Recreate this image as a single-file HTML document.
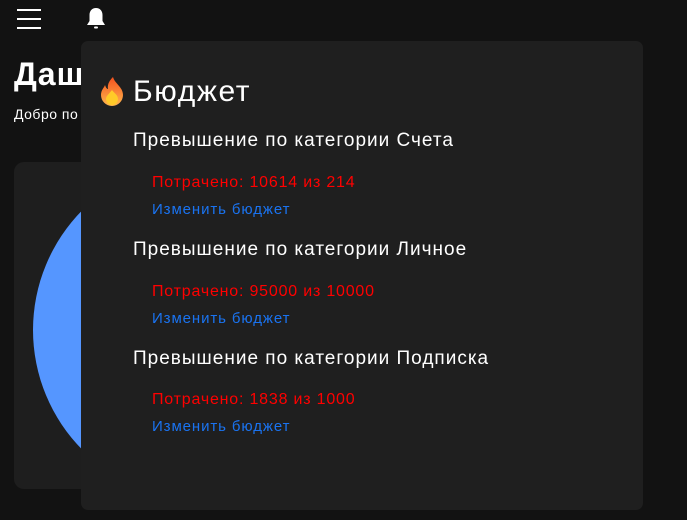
<!DOCTYPE html>
<html><head><meta charset="utf-8"><style>
body{margin:0;width:687px;height:520px;background:#121212;overflow:hidden;position:relative;font-family:"Liberation Sans",sans-serif;color:#fff}
.burger{position:absolute;left:17px;top:9px;width:24px}
.burger div{height:2px;background:#fff;margin-bottom:7px}
.h1{position:absolute;left:14px;top:56px;font-size:32px;font-weight:bold;letter-spacing:1px}
.sub{position:absolute;left:14px;top:106px;font-size:14px;letter-spacing:0.5px}
.card{position:absolute;left:14px;top:162px;width:600px;height:327px;background:#1e1e1e;border-radius:10px;overflow:hidden}
.circle{position:absolute;left:19px;top:-2px;width:340px;height:340px;border-radius:50%;background:#5596ff}
.pop{position:absolute;left:81px;top:41px;width:562px;height:469px;background:#1f1f1f;border-radius:7px}
.t{position:absolute;left:52px;top:34px;font-size:30px;letter-spacing:1.6px}
.fire{position:absolute;left:18px;top:35px}
.hd{position:absolute;left:52px;font-size:19px;letter-spacing:1px}
.red{position:absolute;left:71px;font-size:16px;color:#f00;letter-spacing:0.8px}
.lnk{position:absolute;left:71px;font-size:15px;color:#1a73f0;letter-spacing:0.9px}
</style></head><body>
<div class="burger"><div></div><div></div><div></div></div>
<svg style="position:absolute;left:84px;top:6px" width="24" height="26" viewBox="0 0 24 26"><path d="M12 2c-4 0-6.5 3-6.5 7v6L3 19h18l-2.5-4V9c0-4-2.5-7-6.5-7z" fill="#fff"/><rect x="10" y="20.5" width="4" height="2" rx="1" fill="#fff"/></svg>
<div class="h1">Даш</div>
<div class="sub">Добро по</div>
<div class="card"><div class="circle"></div></div>
<div class="pop">
<svg class="fire" width="26" height="30" viewBox="0 0 26 30"><defs><linearGradient id="g" x1="0" y1="0" x2="0" y2="1"><stop offset="0" stop-color="#f4511e"/><stop offset="1" stop-color="#ffb74d"/></linearGradient></defs><path d="M14 1C16 8 24 11 24 19a11 11 0 0 1-22 0c0-5 3-7 4-10 1 3 2 4 3 4C8 8 11 4 14 1z" fill="url(#g)"/><path d="M13 14c2 3 6 5 6 9a6 6 0 0 1-12 0c0-3 3-5 6-9z" fill="#ffca28"/></svg>
<div class="t">Бюджет</div>
<div class="hd" style="top:89px">Превышение по категории Счета</div>
<div class="red" style="top:133px">Потрачено: 10614 из 214</div>
<div class="lnk" style="top:160px">Изменить бюджет</div>
<div class="hd" style="top:198px">Превышение по категории Личное</div>
<div class="red" style="top:242px">Потрачено: 95000 из 10000</div>
<div class="lnk" style="top:269px">Изменить бюджет</div>
<div class="hd" style="top:307px">Превышение по категории Подписка</div>
<div class="red" style="top:350px">Потрачено: 1838 из 1000</div>
<div class="lnk" style="top:377px">Изменить бюджет</div>
</div>
</body></html>
